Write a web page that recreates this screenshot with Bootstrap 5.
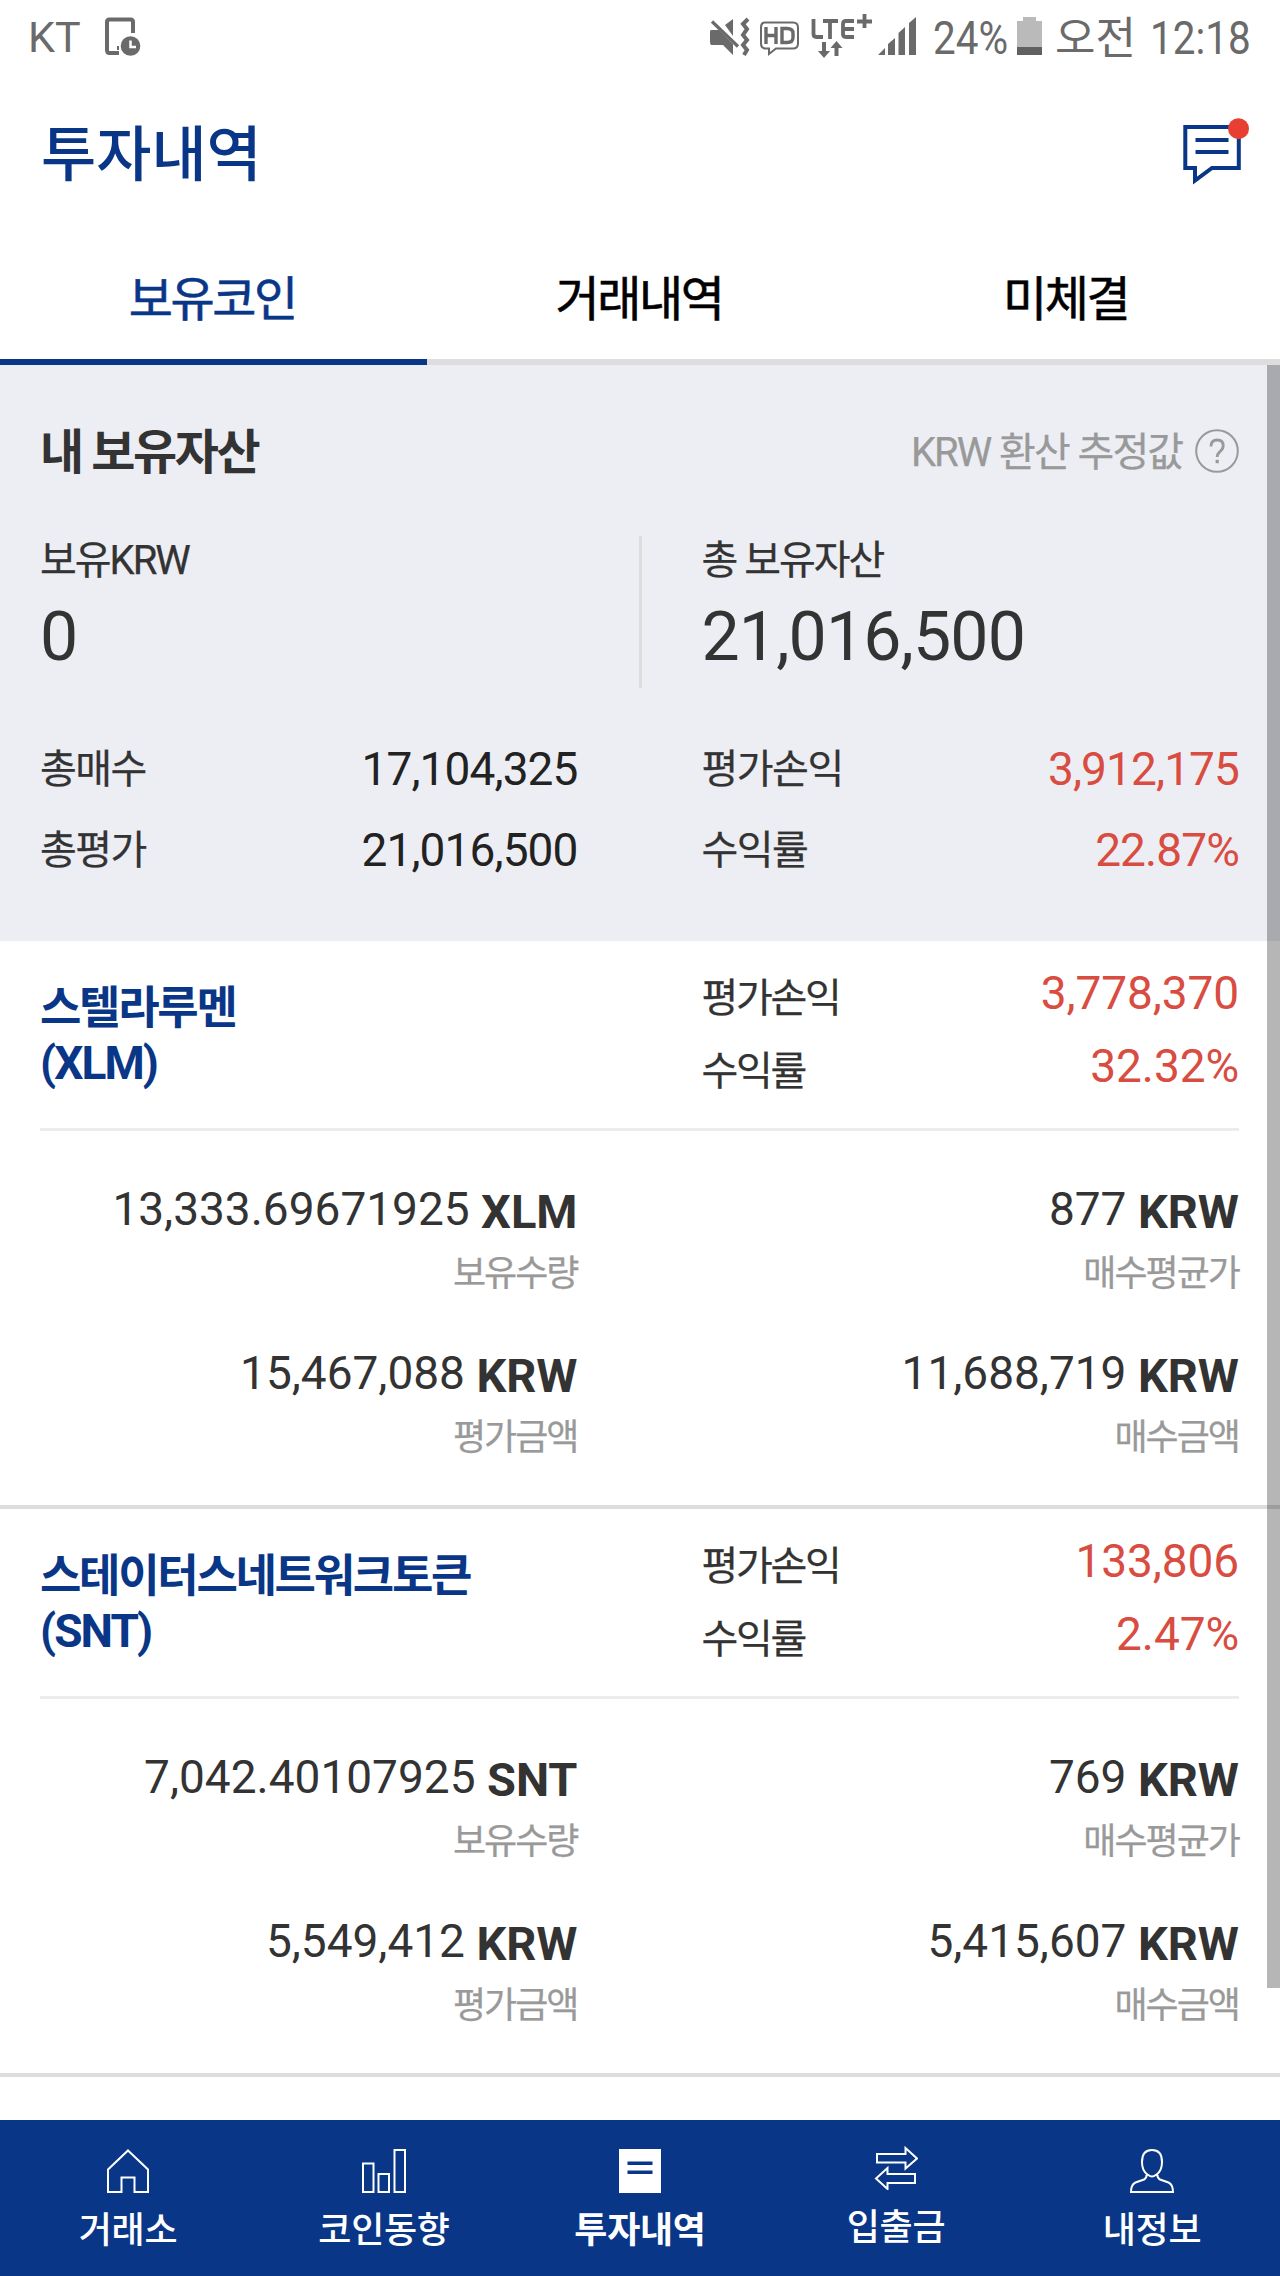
<!DOCTYPE html>
<html lang="ko">
<head>
<meta charset="utf-8">
<meta name="viewport" content="width=device-width, initial-scale=1">
<title>투자내역</title>
<link href="https://cdn.jsdelivr.net/npm/bootstrap@5.3.0/dist/css/bootstrap.min.css" rel="stylesheet">
<style>
  :root { --navy: #093687; --ink: #333; --soft: #999; --up: #d84c41; --line: #ddd; }
  body { font-family: Roboto, "Noto Sans CJK KR", sans-serif; color: var(--ink); background: #fff; }
  .screen { width: 1280px; height: 2276px; }
  .screen svg { display: block; flex: none; }

  /* status bar */
  .statusbar { height: 72px; padding: 0 28px 0 28px; color: #6a6a6a; }
  .carrier { font-size: 43px; line-height: 74px; margin-right: 24px; }
  .status-icons { margin-top: 12px; }
  .battery { margin: 17px 0 0 10px; }
  .squeeze { display: inline-block; font-size: 47px; line-height: 75px; transform: scaleX(.86); transform-origin: left; white-space: nowrap; }
  .pct { width: 74px; margin-left: 16px; }
  .clock { width: 102px; margin-left: 12px; }
  .ampm { font-size: 44px; line-height: 78px; margin-left: 12px; width: 83px; white-space: nowrap; }

  /* header and tabs */
  .titlebar { height: 167px; padding: 0 30px 0 41px; color: var(--navy); }
  .titlebar h1 { font-size: 60px; line-height: 167px; font-weight: 500; }
  .chat-icon { margin-top: 46px; }
  .tabs .nav-link { padding: 1px 2px 0 0; font-size: 48px; line-height: 119px; font-weight: 400; letter-spacing: -.05em; color: #000; -webkit-text-stroke: .6px currentColor; border-bottom: 6px solid var(--line); border-radius: 0; }
  .tabs .nav-link.active { color: var(--navy); border-color: var(--navy); }

  /* asset summary */
  .summary { height: 576px; padding: 58px 41px 0 40px; background: #edeef4; }
  .summary-head { height: 60px; }
  .summary h2 { font-size: 48px; line-height: 60px; font-weight: 700; letter-spacing: -.05em; }
  .estimate { font-size: 40px; line-height: 60px; letter-spacing: -.05em; word-spacing: 1px; color: var(--soft); gap: 13px; }
  .help-icon { margin-bottom: 4px; }
  .pair { gap: 124px; }
  .totals { margin-top: 53px; }
  .totals .cap-text { font-size: 40px; line-height: 50px; letter-spacing: -.05em; }
  .totals .big { font-size: 68px; line-height: 102px; letter-spacing: -.9px; }
  .totals .rule { width: 3px; margin: 0 -64px 0 -63px; background: var(--line); }
  .figures { margin-top: 41px; }
  .figures .line-item { line-height: 81px; }
  .figures .key { font-size: 40px; letter-spacing: -1.5px; }
  .figures .num { font-size: 46px; letter-spacing: -.9px; color: #222; }
  .figures .num.up, .up { color: var(--up); }
  .cap-text, .key, .keys, .desc, .estimate span { -webkit-text-stroke: .25px currentColor; }

  /* holdings */
  .holding { height: 568px; border-bottom: 4px solid var(--line); padding: 0 41px 0 40px; }
  .holding-head { height: 190px; border-bottom: 3px solid #ececec; }
  .coin { font-size: 45px; line-height: 55px; font-weight: 700; letter-spacing: -2.300px; color: var(--navy); padding-top: 40px; }
  .coin .ticker { font-size: 46px; letter-spacing: -1.900px; }
  .keys { font-size: 40px; line-height: 73px; letter-spacing: -2.300px; padding-top: 21px; }
  .vals { font-size: 46px; line-height: 73px; letter-spacing: -.1px; padding-top: 16px; }
  .amounts { padding-top: 50px; }
  .amounts .amt { font-size: 46px; line-height: 56px; white-space: nowrap; }
  .amounts .unit { font-size: 47px; font-weight: 700; line-height: 1; vertical-align: -3px; }
  .amounts .desc { font-size: 36px; line-height: 74px; letter-spacing: -.055em; color: var(--soft); margin-bottom: 34px; }

  .thumb { right: 0; top: 365px; width: 13px; height: 1623px; background: rgba(0,0,0,.285); }

  /* bottom navigation */
  .bottombar { height: 156px; background: var(--navy); color: #fff; }
  .bottombar a { color: inherit; text-decoration: none; font-size: 36px; line-height: 40px; letter-spacing: -.3px; padding-top: 29px; gap: 18px; font-weight: 500; }
  .bottombar a.current { font-weight: 700; }
  .bottombar a.transfer { padding-top: 26px; }
</style>
<script src="https://cdn.jsdelivr.net/npm/bootstrap@5.3.0/dist/js/bootstrap.bundle.min.js"></script>
</head>
<body>
<div class="screen position-relative overflow-hidden d-flex flex-column">

  <div class="statusbar d-flex justify-content-between">
    <div class="d-flex">
      <span class="carrier">KT</span>
      <svg class="mt-3" width="36" height="40" viewBox="0 0 36 40" fill="none">
        <path d="M28 17V6q0-2.500-2.500-2.500H4.500Q2 3.500 2 6V34q0 3 2.500 3H14" stroke="#6a6a6a" stroke-width="4"/>
        <path d="M12 30h2v4h-2z" fill="#6a6a6a"/>
        <circle cx="25.500" cy="30" r="9.800" fill="#6a6a6a"/>
        <path d="M25.500 24.500V31H31" stroke="#fff" stroke-width="2.500"/>
      </svg>
    </div>
    <div class="d-flex">
      <!-- muted, HD voice, LTE+ and signal strength -->
      <svg class="status-icons" width="208" height="48" viewBox="708 12 208 48" fill="none">
        <path d="M710 30h8l14 14v11l-10-10h-12q-1-1-1-3V32q0-2 1-2zM724 25l8-6v17z" fill="#6a6a6a"/>
        <path d="M711 21.500l26 25" stroke="#6a6a6a" stroke-width="3.200"/>
        <path d="M747 19l-5 5 4 5-4 6 4 5-4 5 4 5-3 5" stroke="#6a6a6a" stroke-width="4"/>
        <path d="M764 22.500h28q5 0 5 5v16q0 5-5 5H775l-7 5.500v-5.500h-4q-4-.500-4-5v-16q0-5 4-5z" stroke="#6a6a6a" stroke-width="2"/>
        <path d="M765 27v17M775 27v17M765 35.500h10M781 28.500v14h5q6 0 6-5v-4q0-5-6-5z" stroke="#6a6a6a" stroke-width="3.400"/>
        <path d="M812.500 19v15q0 3 3 3H822M822 21h15M829 21v18M853 21h-8q-3 0-3 3v10q0 3 3 3h8M842 29h11M856 21.500h15M863.500 14v14" stroke="#6a6a6a" stroke-width="3.800"/>
        <path d="M821 42h4v9h4l-6 7-6-7h4zM833.500 56h4v-8h4l-6-7-6 7h4z" fill="#6a6a6a"/>
        <path d="M877 55l7-7v7zM887 55V44l7-6v17zM897.500 55V33l6.500-6v28zM908 55V23l7-6v38z" fill="#6a6a6a"/>
      </svg>
      <span class="squeeze pct">24%</span>
      <svg class="battery" width="26" height="38" viewBox="0 0 26 38"><path d="M6 0h13v4h6v26H0V4h6z" fill="#bababa"/><path d="M0 30h25v8H0z" fill="#616161"/></svg>
      <span class="ampm">오전</span>
      <span class="squeeze clock">12:18</span>
    </div>
  </div>

  <header class="titlebar d-flex justify-content-between">
    <h1 class="m-0">투자내역</h1>
    <svg class="chat-icon" width="69" height="68" viewBox="1181 118 69 68" fill="none">
      <path d="M1185.300 127h53.500v41H1212l-17 12.500V168h-9.700z" stroke="#093687" stroke-width="4"/>
      <path d="M1195.500 140h33M1195.500 152h33" stroke="#093687" stroke-width="4"/>
      <circle cx="1238.500" cy="128.700" r="10.500" fill="#e83f33"/>
    </svg>
  </header>

  <nav class="tabs nav nav-justified flex-nowrap">
    <a class="nav-link active col" href="#">보유코인</a>
    <a class="nav-link col" href="#">거래내역</a>
    <a class="nav-link col" href="#">미체결</a>
  </nav>

  <section class="summary">
    <div class="summary-head d-flex justify-content-between align-items-center">
      <h2 class="m-0">내 보유자산</h2>
      <div class="estimate d-flex align-items-center">
        <span>KRW 환산 추정값</span>
        <svg class="help-icon" width="44" height="44" viewBox="0 0 44 44" fill="none" stroke="#999"><circle cx="22" cy="22" r="20.800" stroke-width="2"/><path d="M16 17.500q0-6.500 6.200-6.500 6 0 6 5.800 0 3.200-3.200 5.800-2.800 2.300-2.800 5.400" stroke-width="2.800"/><path d="M22.200 30.800v3.400" stroke-width="3.200"/></svg>
      </div>
    </div>
    <div class="totals pair d-flex">
      <div class="col"><div class="cap-text">보유KRW</div><div class="big">0</div></div>
      <div class="rule"></div>
      <div class="col"><div class="cap-text">총 보유자산</div><div class="big">21,016,500</div></div>
    </div>
    <div class="figures pair d-flex">
      <div class="col">
        <div class="line-item d-flex justify-content-between"><span class="key">총매수</span><span class="num">17,104,325</span></div>
        <div class="line-item d-flex justify-content-between"><span class="key">총평가</span><span class="num">21,016,500</span></div>
      </div>
      <div class="col">
        <div class="line-item d-flex justify-content-between"><span class="key">평가손익</span><span class="num up">3,912,175</span></div>
        <div class="line-item d-flex justify-content-between"><span class="key">수익률</span><span class="num up">22.87%</span></div>
      </div>
    </div>
  </section>

  <article class="holding">
    <div class="holding-head pair d-flex">
      <div class="coin col">스텔라루멘<br><span class="ticker">(XLM)</span></div>
      <div class="col d-flex justify-content-between">
        <div class="keys">평가손익<br>수익률</div>
        <div class="vals up text-end">3,778,370<br>32.32%</div>
      </div>
    </div>
    <div class="amounts pair d-flex text-end">
      <div class="col">
        <div class="amt">13,333.69671925 <span class="unit">XLM</span></div><div class="desc">보유수량</div>
        <div class="amt">15,467,088 <span class="unit">KRW</span></div><div class="desc">평가금액</div>
      </div>
      <div class="col">
        <div class="amt">877 <span class="unit">KRW</span></div><div class="desc">매수평균가</div>
        <div class="amt">11,688,719 <span class="unit">KRW</span></div><div class="desc">매수금액</div>
      </div>
    </div>
  </article>

  <article class="holding">
    <div class="holding-head pair d-flex">
      <div class="coin col">스테이터스네트워크토큰<br><span class="ticker">(SNT)</span></div>
      <div class="col d-flex justify-content-between">
        <div class="keys">평가손익<br>수익률</div>
        <div class="vals up text-end">133,806<br>2.47%</div>
      </div>
    </div>
    <div class="amounts pair d-flex text-end">
      <div class="col">
        <div class="amt">7,042.40107925 <span class="unit">SNT</span></div><div class="desc">보유수량</div>
        <div class="amt">5,549,412 <span class="unit">KRW</span></div><div class="desc">평가금액</div>
      </div>
      <div class="col">
        <div class="amt">769 <span class="unit">KRW</span></div><div class="desc">매수평균가</div>
        <div class="amt">5,415,607 <span class="unit">KRW</span></div><div class="desc">매수금액</div>
      </div>
    </div>
  </article>

  <div class="thumb position-absolute"></div>

  <nav class="bottombar d-flex mt-auto">
    <a class="col d-flex flex-column align-items-center" href="#">
      <svg width="44" height="44" viewBox="0 0 44 44" fill="none" stroke="#fff" stroke-width="2"><path d="M22 1.500L42 20.500V43H28.500V28.500h-13V43H2V20.500z"/></svg>
      <span>거래소</span>
    </a>
    <a class="col d-flex flex-column align-items-center" href="#">
      <svg width="44" height="44" viewBox="0 0 44 44" fill="none" stroke="#fff" stroke-width="2"><path d="M1 14.500h10.500V43H1zM16.500 25H27v18H16.500zM32.500 1H43v42H32.500z"/></svg>
      <span>코인동향</span>
    </a>
    <a class="col d-flex flex-column align-items-center current" href="#">
      <svg width="42" height="44" viewBox="0 0 42 44"><path d="M0 0h42v44H0z" fill="#fff"/><path d="M8.500 12.500h25V16h-25zM8.500 21.500h25V25h-25z" fill="#093687"/></svg>
      <span>투자내역</span>
    </a>
    <a class="col d-flex flex-column align-items-center transfer" href="#">
      <svg width="44" height="44" viewBox="0 0 44 44" fill="none" stroke="#fff" stroke-width="2"><path d="M3 8h28.500V2L43 12.500 31.500 22.500V16.500H3zM41 28H13.500V22L2 32.500 13.500 43V37H41z"/></svg>
      <span>입출금</span>
    </a>
    <a class="col d-flex flex-column align-items-center" href="#">
      <svg width="44" height="44" viewBox="0 0 44 44" fill="none" stroke="#fff" stroke-width="2"><path d="M22 1C14.500 1 12 6 12 13c0 6 2.500 10.500 5.500 12.500q3 2 4.500 2t4.500-2C29.500 23.500 32 19 32 13 32 6 29.500 1 22 1zM16.500 25.500Q17 29 14 30.500L5.500 33.500Q1 35.500 1 43H43Q43 35.500 38.500 33.500L30 30.500Q27 29 27.500 25.500"/></svg>
      <span>내정보</span>
    </a>
  </nav>
</div>
</body>
</html>
